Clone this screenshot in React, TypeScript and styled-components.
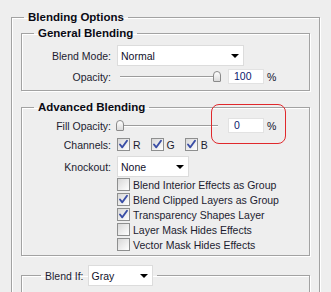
import React from "react";
import styled, { createGlobalStyle } from "styled-components";

const GlobalStyle = createGlobalStyle`
  html, body {
    margin: 0;
    padding: 0;
    background: #eeeeee;
    font-family: "Liberation Sans", Arial, sans-serif;
    font-size: 10.5px;
    color: #1c1c30;
  }
`;

const Page = styled.div`
  position: relative;
  width: 331px;
  height: 292px;
  overflow: hidden;
  padding: 10px 11px 0 11px;
  box-sizing: border-box;
`;

const Group = styled.fieldset<{ $pt?: number; $pb?: number; $mt?: number }>`
  margin: ${(p) => p.$mt ?? 0}px 0 0 0;
  padding: ${(p) => p.$pt ?? 5}px 0 ${(p) => p.$pb ?? 6}px 0;
  border: 1px solid #a2a2a2;
  box-shadow: 1px 1px 0 #ffffff, inset 1px 1px 0 #ffffff;
  min-width: 0;
`;

const OuterGroup = styled(Group)`
  padding: 2px 9px 40px 9px;
`;

const Legend = styled.legend<{ $ml?: number }>`
  margin-left: ${(p) => p.$ml ?? 12}px;
  padding: 0 4px;
  font-weight: bold;
  font-size: 11.5px;
  color: #0a0a14;
  line-height: 14px;
`;

const ControlLegend = styled.legend`
  margin-left: 19px;
  padding: 0 4px;
  display: flex;
  align-items: center;
  gap: 4px;
  line-height: 14px;
`;

const Rows = styled.div`
  display: grid;
  grid-template-columns: 89px 1fr;
  column-gap: 6px;
  align-items: center;
`;

const Label = styled.div<{ $mt?: number }>`
  text-align: right;
  white-space: nowrap;
  margin-top: ${(p) => p.$mt ?? 0}px;
`;

const Cell = styled.div<{ $mt?: number }>`
  display: flex;
  align-items: center;
  margin-top: ${(p) => p.$mt ?? 0}px;
`;

const Select = styled.div<{ $w: number }>`
  width: ${(p) => p.$w}px;
  height: 21px;
  box-sizing: border-box;
  background: #ffffff;
  border: 1px solid #dcdcdc;
  display: flex;
  align-items: center;
  justify-content: space-between;
  padding: 0 4px 0 3px;
  color: #10102a;
`;

const Arrow = styled.span`
  width: 0;
  height: 0;
  border-left: 4px solid transparent;
  border-right: 4px solid transparent;
  border-top: 4px solid #000;
`;

const Slider = styled.div`
  position: relative;
  width: 104px;
  height: 12px;
  margin-left: -1px;
`;

const Track = styled.div`
  margin-top: 5px;
  margin-left: 4px;
  width: 98px;
  height: 1px;
  background: #9c9c9c;
  border-bottom: 1px solid #ffffff;
`;

const Thumb = styled.div`
  position: absolute;
  top: 0;
  width: 8px;
  height: 11px;
  box-sizing: border-box;
  border: 1px solid #8a8a8a;
  border-radius: 4px 4px 1px 1px;
  background: linear-gradient(#ffffff, #dadada);
`;

const NumberBox = styled.div`
  width: 36px;
  height: 15px;
  box-sizing: border-box;
  margin-left: 8px;
  background: #ffffff;
  border: 1px solid #e2e2e2;
  padding-left: 5px;
  line-height: 13px;
  color: #0b1a6e;
`;

const Unit = styled.span`
  margin-left: 3px;
  color: #10102a;
`;

const Check = styled.span`
  width: 13px;
  height: 13px;
  box-sizing: border-box;
  border: 1px solid #8e8f8f;
  background: linear-gradient(135deg, #d8d8d8, #ffffff);
  display: inline-flex;
  align-items: center;
  justify-content: center;
  flex-shrink: 0;
`;

const CheckItem = styled.label<{ $gap?: number }>`
  display: inline-flex;
  align-items: center;
  gap: 3px;
  margin-right: ${(p) => p.$gap ?? 0}px;
  white-space: nowrap;
`;

const CheckList = styled.div`
  display: flex;
  flex-direction: column;
  gap: 2px;
  margin-top: 1px;
`;

const Callout = styled.div`
  position: absolute;
  left: 211px;
  top: 104px;
  width: 75px;
  height: 40px;
  box-sizing: border-box;
  border: 1px solid #e0282c;
  border-radius: 8px;
  pointer-events: none;
`;

const Box = ({ checked, label, gap }: { checked?: boolean; label: string; gap?: number }) => (
  <CheckItem $gap={gap}>
    <Check>
      {checked && (
        <svg width="11" height="11" viewBox="0 0 11 11">
          <path d="M2 5.5 L4.3 8.3 L9 1.8" fill="none" stroke="#3a4ea6" strokeWidth="1.9" strokeLinecap="round" strokeLinejoin="round" />
        </svg>
      )}
    </Check>
    {label}
  </CheckItem>
);

const SliderField = ({ pos, value }: { pos: number; value: string }) => (
  <>
    <Slider>
      <Track />
      <Thumb style={{ left: pos }} />
    </Slider>
    <NumberBox>{value}</NumberBox>
    <Unit>%</Unit>
  </>
);

export default function App() {
  return (
    <>
      <GlobalStyle />
      <Page>
        <OuterGroup>
          <Legend $ml={3}>Blending Options</Legend>

          <Group $pt={5} $pb={6}>
            <Legend>General Blending</Legend>
            <Rows>
              <Label>Blend Mode:</Label>
              <Cell>
                <Select $w={127}>
                  Normal
                  <Arrow />
                </Select>
              </Cell>
              <Label $mt={3}>Opacity:</Label>
              <Cell $mt={3}>
                <SliderField pos={97} value="100" />
              </Cell>
            </Rows>
          </Group>

          <Group $mt={9} $pt={4} $pb={4}>
            <Legend>Advanced Blending</Legend>
            <Rows>
              <Label>Fill Opacity:</Label>
              <Cell>
                <SliderField pos={0} value="0" />
              </Cell>
              <Label $mt={5}>Channels:</Label>
              <Cell $mt={5}>
                <Box checked label="R" gap={10} />
                <Box checked label="G" gap={10} />
                <Box checked label="B" />
              </Cell>
              <Label $mt={5}>Knockout:</Label>
              <Cell $mt={5}>
                <Select $w={72}>
                  None
                  <Arrow />
                </Select>
              </Cell>
              <div />
              <CheckList>
                <Box label="Blend Interior Effects as Group" />
                <Box checked label="Blend Clipped Layers as Group" />
                <Box checked label="Transparency Shapes Layer" />
                <Box label="Layer Mask Hides Effects" />
                <Box label="Vector Mask Hides Effects" />
              </CheckList>
            </Rows>
          </Group>

          <Group $mt={9} $pt={40}>
            <ControlLegend>
              Blend If:
              <Select $w={65}>
                Gray
                <Arrow />
              </Select>
            </ControlLegend>
          </Group>
        </OuterGroup>
        <Callout />
      </Page>
    </>
  );
}
